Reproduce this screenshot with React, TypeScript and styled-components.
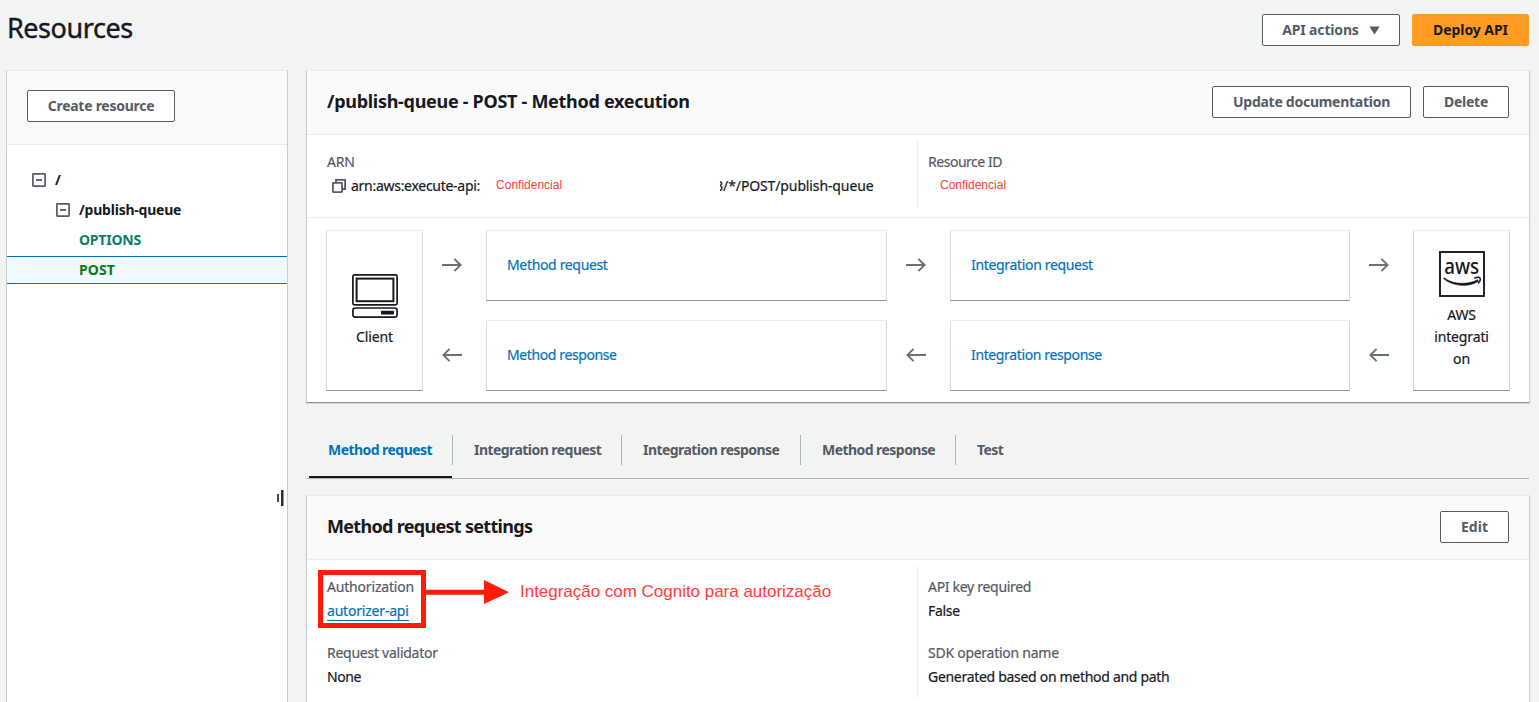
import React from 'react';
import styled, { createGlobalStyle, css } from 'styled-components';

const GlobalStyle = createGlobalStyle`
  *, *::before, *::after { box-sizing: border-box; }
  body {
    margin: 0;
    background: #f2f3f3;
    color: #16191f;
    font-family: "Noto Sans", "Open Sans", sans-serif;
    font-size: 14px;
    line-height: 22px;
    letter-spacing: -0.3px;
    -webkit-text-stroke: 0.2px;
  }
`;

type Tracked = { $track?: number };
const tracking = css<Tracked>`
  ${({ $track }) => $track !== undefined && `letter-spacing: ${$track}px;`}
`;

const bold = css`
  font-weight: 700;
  -webkit-text-stroke: 0;
`;

const Page = styled.div`
  height: 702px;
  width: 1539px;
  overflow: hidden;
  display: flex;
  flex-direction: column;
`;

const TopBar = styled.header`
  display: flex;
  justify-content: space-between;
  align-items: flex-start;
  height: 70px;
  padding: 14px 10px 0 7px;
`;

const PageTitle = styled.h1`
  margin: -4px 0 0;
  font-size: 27px;
  line-height: 36px;
  font-weight: 400;
  letter-spacing: -0.45px;
  -webkit-text-stroke: 0.4px;
`;

const ButtonGroup = styled.div`
  display: flex;
  gap: 12px;
`;

const Button = styled.button<{ $width: number; $primary?: boolean } & Tracked>`
  display: flex;
  align-items: center;
  justify-content: center;
  gap: 10px;
  width: ${({ $width }) => $width}px;
  height: 32px;
  padding: 0;
  border: 1px solid ${({ $primary }) => ($primary ? '#ff9a22' : '#545b64')};
  border-radius: 2px;
  background: ${({ $primary }) => ($primary ? '#ff9a22' : '#fff')};
  color: ${({ $primary }) => ($primary ? '#16191f' : '#545b64')};
  font: 700 14px/22px "Noto Sans", sans-serif;
  letter-spacing: -0.27px;
  -webkit-text-stroke: 0;
  ${tracking}
`;

const Body = styled.div`
  flex: 1;
  display: flex;
  min-height: 0;
`;

const Sidebar = styled.aside`
  position: relative;
  width: 282px;
  margin-left: 6px;
  background: #fff;
  border: 1px solid #c9cfd1;
  border-top-color: #eaeded;
  border-bottom: 0;
`;

const SidebarHeader = styled.div`
  height: 74px;
  padding: 19px 20px;
  background: #fafafa;
  border-bottom: 1px solid #eaeded;
`;

const Tree = styled.ul`
  list-style: none;
  margin: 0;
  padding: 20px 0 0;
`;

const TreeItem = styled.li<{ $indent: number; $selected?: boolean; $color?: string } & Tracked>`
  display: flex;
  align-items: center;
  gap: 9px;
  height: 30px;
  padding-left: ${({ $indent }) => $indent}px;
  ${bold}
  color: ${({ $color }) => $color ?? '#16191f'};
  ${({ $selected }) =>
    $selected &&
    css`
      height: 28px;
      margin-top: 1px;
      background: #f1faff;
      border-top: 1px solid #0073bb;
      border-bottom: 1px solid #0073bb;
    `}
  ${tracking}
`;

const ResizeHandle = styled.div`
  position: absolute;
  right: 3px;
  top: 419px;
  display: flex;
  align-items: center;
  gap: 2px;
  &::before { content: ''; width: 2px; height: 8px; background: #4a4d52; }
  &::after { content: ''; width: 3px; height: 16px; background: #2a2d32; border-right: 1px solid #8a8d92; }
`;

const Main = styled.main`
  width: 1224px;
  margin-left: 18px;
`;

const Panel = styled.section`
  background: #fff;
  border: 1px solid #c9cfd1;
  border-top-color: #eaeded;
  border-bottom-color: #879596;
  box-shadow: 0 1px 1px rgba(0, 28, 36, 0.12);
`;

const PanelHeader = styled.div`
  display: flex;
  justify-content: space-between;
  height: 64px;
  padding: 15px 20px 0;
  background: #fafafa;
  border-bottom: 1px solid #eaeded;
`;

const PanelTitle = styled.h2<Tracked>`
  margin: 4px 0 0;
  font-size: 18px;
  line-height: 22px;
  ${bold}
  ${tracking}
`;

const Details = styled.div<{ $height: number }>`
  display: flex;
  height: ${({ $height }) => $height}px;
  padding-top: 6px;
`;

const Column = styled.div<{ $height: number; $divided?: boolean }>`
  flex: ${({ $divided }) => ($divided ? '1' : '0 0 610px')};
  height: ${({ $height }) => $height}px;
  padding: 10px 0 0 ${({ $divided }) => ($divided ? 10 : 20)}px;
  border-left: ${({ $divided }) => ($divided ? '1px solid #eaeded' : '0')};
  display: flex;
  flex-direction: column;
  gap: 20px;
`;

const Field = styled.div`
  display: flex;
  flex-direction: column;
  align-items: flex-start;
  gap: 2px;
`;

const Label = styled.div<Tracked>`
  color: #545b64;
  ${tracking}
`;

const Value = styled.div<Tracked>`
  display: flex;
  align-items: center;
  height: 22px;
  white-space: pre;
  ${tracking}
`;

const CopyIcon = styled.svg`
  margin: 0 5px 0 5px;
`;

const Note = styled.span<{ $indent: number }>`
  margin-left: ${({ $indent }) => $indent}px;
  margin-top: -3px;
  font: 12px/22px "Liberation Sans", Arial, sans-serif;
  letter-spacing: 0;
  -webkit-text-stroke: 0;
  color: #ff3b3b;
`;

const ArnTail = styled.span`
  display: flex;
  margin-left: 158px;
  letter-spacing: -0.12px;
`;

const ClippedDigit = styled.span`
  display: flex;
  justify-content: flex-end;
  width: 3px;
  overflow: hidden;
`;

const Diagram = styled.div`
  display: grid;
  grid-template-columns: 97px 63px 401px 63px 400px 63px 97px;
  grid-template-rows: 71px 71px;
  row-gap: 19px;
  height: 185px;
  padding: 12px 0 0 19px;
  border-top: 1px solid #eaeded;
`;

const Card = styled.div`
  background: #fff;
  border: 1px solid #d5dbdb;
  border-top-color: #eaeded;
  border-bottom-color: #879596;
  border-radius: 1px;
`;

const EndpointCard = styled(Card)<{ $column: number; $top: number; $gap: number }>`
  grid-row: 1 / 3;
  grid-column: ${({ $column }) => $column};
  display: flex;
  flex-direction: column;
  align-items: center;
  gap: ${({ $gap }) => $gap}px;
  padding: ${({ $top }) => $top}px 20px 0;
  text-align: center;
`;

const EndpointName = styled.div`
  width: 55px;
  overflow-wrap: break-word;
  letter-spacing: -0.15px;
`;

const StageCard = styled(Card)<Tracked>`
  display: flex;
  align-items: center;
  padding: 0 0 1px 20px;
  color: #0073bb;
  ${tracking}
`;

const ArrowCell = styled.div`
  display: flex;
  align-items: center;
  justify-content: center;
  padding: 0 5px 1px 0;
`;

const Tabs = styled.nav`
  display: flex;
  height: 61px;
  margin: 15px 0 0 1px;
  padding: 17px 0 0 2px;
  border-bottom: 1px solid #aab7b8;
  width: 1222px;
`;

const Tab = styled.a<{ $width: number; $active?: boolean; $last?: boolean }>`
  position: relative;
  width: ${({ $width }) => $width}px;
  height: 30px;
  padding-left: ${({ $active }) => ($active ? 19 : 21)}px;
  border-right: ${({ $last }) => ($last ? 0 : '1px solid #aab7b8')};
  ${bold}
  line-height: 30px;
  letter-spacing: -0.55px;
  color: ${({ $active }) => ($active ? '#0073bb' : '#545b64')};
  ${({ $active }) =>
    $active &&
    css`
      &::after {
        content: '';
        position: absolute;
        left: 0;
        right: 0;
        top: 41px;
        height: 2px;
        background: #16191f;
      }
    `}
`;

const SettingsPanel = styled(Panel)`
  margin-top: 16px;
  height: 260px;
`;

const Link = styled.a`
  height: 22px;
  color: #0073bb;
  letter-spacing: -0.2px;
  box-shadow: inset 0 -1px 0 #fff, inset 0 -2px 0 #0073bb;
`;

const HighlightedField = styled(Field)`
  position: relative;
`;

const Callout = styled.div`
  position: absolute;
  left: -9px;
  top: -6px;
  display: flex;
  align-items: center;
  white-space: nowrap;
`;

const CalloutFrame = styled.div`
  width: 108px;
  height: 58px;
  border: 5px solid #ff1a0a;
`;

const CalloutText = styled.span`
  margin: -14px 0 0 10px;
  font: 17px/22px "Liberation Sans", Arial, sans-serif;
  letter-spacing: -0.02px;
  -webkit-text-stroke: 0;
  color: #ff3b3b;
`;

const CalloutArrow = styled.svg`
  margin-top: -14px;
`;

const CollapseIcon = () => (
  <svg width="14" height="14" viewBox="0 0 14 14" fill="none" stroke="#545b64">
    <rect x="0.9" y="0.9" width="12.2" height="12.2" strokeWidth="1.7" rx="0.5" />
    <path d="M4 7H10" strokeWidth="1.8" />
  </svg>
);

const Arrow = ({ back }: { back?: boolean }) => (
  <svg width="20" height="14" viewBox="0 0 20 14" fill="none" stroke="#687078" strokeWidth="1.9">
    {back ? <path d="M20 7H1.4M7.6 0.8L1.4 7L7.6 13.2" /> : <path d="M0 7H18.6M12.4 0.8L18.6 7L12.4 13.2" />}
  </svg>
);

const ComputerIcon = () => (
  <svg width="46" height="44" viewBox="0 0 46 44" fill="none" stroke="#16191f">
    <rect x="0.9" y="0.9" width="44.2" height="30" rx="1.6" strokeWidth="1.7" />
    <rect x="4.6" y="4.6" width="36.8" height="22.6" strokeWidth="2" />
    <rect x="0.9" y="34" width="44.2" height="9.2" rx="2.4" strokeWidth="1.7" />
    <rect x="29" y="36.8" width="13" height="3.8" rx="0.8" fill="#16191f" stroke="none" />
  </svg>
);

const AwsIcon = () => (
  <svg width="46" height="46" viewBox="0 0 46 46" fill="none" stroke="#16191f">
    <rect x="1" y="1" width="44" height="44" strokeWidth="1.9" />
    <text x="22.7" y="23" textAnchor="middle" textLength="35" lengthAdjust="spacingAndGlyphs" fontFamily="Noto Sans" fontSize="21" fontWeight="500" letterSpacing="0" fill="#16191f" stroke="none">
      aws
    </text>
    <path d="M5 26.8C14 33.4 29 34.2 38.6 28.6L39.4 30.2C29 37 13 35.2 4.4 27.6Z" fill="#16191f" strokeWidth="0.5" />
    <path d="M35.2 27.2C38 26.2 40.4 26.2 41 27C41.6 28.2 40.8 30.6 39 32.4" strokeWidth="1.5" />
  </svg>
);

const tabs: { label: string; width: number; last?: boolean }[] = [
  { label: 'Method request', width: 144 },
  { label: 'Integration request', width: 169 },
  { label: 'Integration response', width: 179 },
  { label: 'Method response', width: 155 },
  { label: 'Test', width: 80, last: true },
];

export default function App() {
  return (
    <Page>
      <GlobalStyle />
      <TopBar>
        <PageTitle>Resources</PageTitle>
        <ButtonGroup>
          <Button $width={138} $track={-0.16}>
            API actions
            <svg width="11" height="9" viewBox="0 0 11 9"><path d="M0.4 0.4H10.6L5.5 8.6Z" fill="#545b64" /></svg>
          </Button>
          <Button $width={117} $primary $track={-0.06}>Deploy API</Button>
        </ButtonGroup>
      </TopBar>
      <Body>
        <Sidebar>
          <SidebarHeader>
            <Button $width={148}>Create resource</Button>
          </SidebarHeader>
          <Tree>
            <TreeItem $indent={25}><CollapseIcon />/</TreeItem>
            <TreeItem $indent={49} $track={-0.22}><CollapseIcon />/publish-queue</TreeItem>
            <TreeItem $indent={72} $color="#067f68" $track={-0.22}>OPTIONS</TreeItem>
            <TreeItem $indent={72} $color="#0a7a12" $track={0.1} $selected>POST</TreeItem>
          </Tree>
          <ResizeHandle />
        </Sidebar>
        <Main>
          <Panel>
            <PanelHeader>
              <PanelTitle $track={-0.29}>/publish-queue - POST - Method execution</PanelTitle>
              <ButtonGroup>
                <Button $width={199}>Update documentation</Button>
                <Button $width={86}>Delete</Button>
              </ButtonGroup>
            </PanelHeader>
            <Details $height={82}>
              <Column $height={67}>
                <Field>
                  <Label $track={-0.15}>ARN</Label>
                  <Value $track={-0.28}>
                    <CopyIcon width="14" height="14" viewBox="0 0 14 14" fill="none" stroke="#545b64" strokeWidth="1.8">
                      <rect x="0.9" y="3.9" width="9.2" height="9.2" rx="0.5" />
                      <path d="M4 3.9V0.9H13.1V10H10.1" />
                    </CopyIcon>
                    arn:aws:execute-api:
                    <Note $indent={16}>Confidencial</Note>
                    <ArnTail><ClippedDigit>3</ClippedDigit>/*/POST/publish-queue</ArnTail>
                  </Value>
                </Field>
              </Column>
              <Column $height={67} $divided>
                <Field>
                  <Label $track={-0.47}>Resource ID</Label>
                  <Value><Note $indent={12}>Confidencial</Note></Value>
                </Field>
              </Column>
            </Details>
            <Diagram>
              <EndpointCard $column={1} $top={43} $gap={8}>
                <ComputerIcon />
                <EndpointName>Client</EndpointName>
              </EndpointCard>
              <ArrowCell><Arrow /></ArrowCell>
              <StageCard $track={-0.34}>Method request</StageCard>
              <ArrowCell><Arrow /></ArrowCell>
              <StageCard $track={-0.33}>Integration request</StageCard>
              <ArrowCell><Arrow /></ArrowCell>
              <EndpointCard $column={7} $top={20} $gap={7}>
                <AwsIcon />
                <EndpointName>AWS integration</EndpointName>
              </EndpointCard>
              <ArrowCell><Arrow back /></ArrowCell>
              <StageCard $track={-0.39}>Method response</StageCard>
              <ArrowCell><Arrow back /></ArrowCell>
              <StageCard $track={-0.37}>Integration response</StageCard>
              <ArrowCell><Arrow back /></ArrowCell>
            </Diagram>
          </Panel>
          <Tabs>
            {tabs.map((tab, i) => (
              <Tab key={tab.label} $width={tab.width} $active={i === 0} $last={tab.last}>{tab.label}</Tab>
            ))}
          </Tabs>
          <SettingsPanel>
            <PanelHeader>
              <PanelTitle $track={-0.69}>Method request settings</PanelTitle>
              <Button $width={69} $track={0}>Edit</Button>
            </PanelHeader>
            <Details $height={142}>
              <Column $height={132}>
                <HighlightedField>
                  <Label $track={-0.18}>Authorization</Label>
                  <Link>autorizer-api</Link>
                  <Callout>
                    <CalloutFrame />
                    <CalloutArrow width="84" height="24" viewBox="0 0 84 24" fill="#ff1a0a">
                      <path d="M0 9.8H58V0L83 12.3L58 24V14.8H0Z" />
                    </CalloutArrow>
                    <CalloutText>Integração com Cognito para autorização</CalloutText>
                  </Callout>
                </HighlightedField>
                <Field>
                  <Label $track={-0.26}>Request validator</Label>
                  <Value $track={-0.4}>None</Value>
                </Field>
              </Column>
              <Column $height={132} $divided>
                <Field>
                  <Label $track={-0.3}>API key required</Label>
                  <Value>False</Value>
                </Field>
                <Field>
                  <Label $track={-0.26}>SDK operation name</Label>
                  <Value $track={-0.3}>Generated based on method and path</Value>
                </Field>
              </Column>
            </Details>
          </SettingsPanel>
        </Main>
      </Body>
    </Page>
  );
}
